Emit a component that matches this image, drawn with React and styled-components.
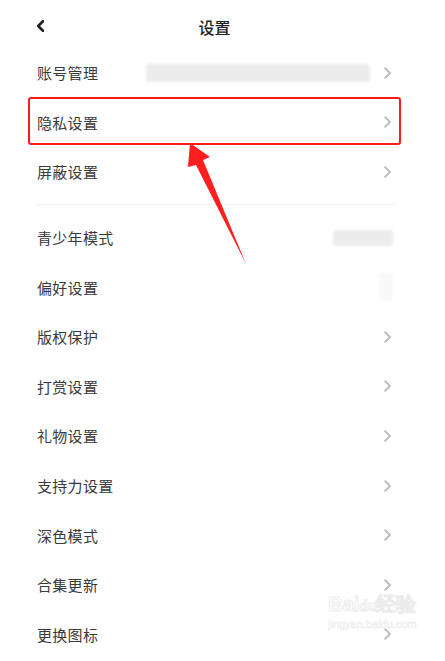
import React from "react";
import styled, { createGlobalStyle } from "styled-components";

const GROUPS = [
  [
    { name: "账号管理", extra: "account" },
    { name: "隐私设置", highlighted: true },
    { name: "屏蔽设置" },
  ],
  [
    { name: "青少年模式", extra: "teen", noArrow: true },
    { name: "偏好设置", extra: "pref", noArrow: true },
    { name: "版权保护" },
    { name: "打赏设置" },
    { name: "礼物设置" },
    { name: "支持力设置" },
    { name: "深色模式" },
    { name: "合集更新" },
    { name: "更换图标" },
  ],
];

const Chevron = ({ color = "#bdbdbd", size = 12, weight = 1.6, left }) => (
  <svg width={size * 0.6} height={size} viewBox="0 0 6 10" fill="none">
    <path
      d={left ? "M5 1 L1 5 L5 9" : "M1 1 L5 5 L1 9"}
      stroke={color}
      strokeWidth={weight}
      strokeLinecap="round"
      strokeLinejoin="round"
    />
  </svg>
);

const App = () => {
  return (
    <StyledPage>
      <GlobalStyle />
      <StyledHeader>
        <StyledBack>
          <Chevron left color="#222" size={12} weight={2.2} />
        </StyledBack>
        <StyledTitle>设置</StyledTitle>
      </StyledHeader>
      {GROUPS.map((group, gi) => (
        <React.Fragment key={gi}>
          {gi > 0 && <StyledDivider />}
          <StyledGroup>
            {group.map((item) => (
              <StyledRow key={item.name} $highlighted={item.highlighted}>
                <StyledLabel>{item.name}</StyledLabel>
                {item.extra === "account" && <StyledBlurBar $width={224} $offset={4} />}
                {item.extra === "teen" && <StyledBlurBar $width={60} $height={16} $offset={-2} />}
                {item.extra === "pref" && <StyledBlurBar $width={14} $height={28} $offset={-2} $light />}
                {!item.noArrow && (
                  <StyledArrow>
                    <Chevron />
                  </StyledArrow>
                )}
              </StyledRow>
            ))}
          </StyledGroup>
        </React.Fragment>
      ))}
      <StyledPointer width="70" height="130" viewBox="180 138 70 130">
        <polygon
          points="190,143 210,157 203,160 246,264 196,165 188,167"
          fill="#ff1f1f"
        />
      </StyledPointer>
      <StyledWatermark>
        <StyledWatermarkLogo>
          Bai<span>du</span>经验
        </StyledWatermarkLogo>
        <StyledWatermarkUrl>jingyan.baidu.com</StyledWatermarkUrl>
      </StyledWatermark>
    </StyledPage>
  );
};

const GlobalStyle = createGlobalStyle`
  body {
    margin: 0;
    background: #ffffff;
    font-family: "Noto Sans CJK SC", "Noto Sans", sans-serif;
  }
`;

const StyledPage = styled.div`
  position: relative;
  width: 445px;
  height: 661px;
  overflow: hidden;
  background: #ffffff;
`;

const StyledHeader = styled.div`
  position: relative;
  height: 48px;
  display: flex;
  align-items: center;
  justify-content: center;
  padding-top: 6px;
  box-sizing: border-box;
`;

const StyledBack = styled.div`
  position: absolute;
  left: 37px;
  top: 20px;
  display: flex;
`;

const StyledTitle = styled.div`
  font-size: 16px;
  font-weight: 500;
  color: #222;
  margin-left: -16px;
`;

const StyledGroup = styled.div`
  display: flex;
  flex-direction: column;
`;

const StyledRow = styled.div`
  position: relative;
  height: 49.6px;
  display: flex;
  align-items: center;
  padding: 0 54px 0 37px;
  gap: 10px;

  ${({ $highlighted }) =>
    $highlighted &&
    `
    &::after {
      content: "";
      position: absolute;
      left: 28px;
      right: 44px;
      top: -1px;
      bottom: 2px;
      border: 2.6px solid #ff1a1a;
      border-radius: 3px;
    }
  `}
`;

const StyledLabel = styled.div`
  flex: 1;
  font-size: 15px;
  color: #3a3a3a;
  letter-spacing: 0.3px;
`;

const StyledBlurBar = styled.div`
  width: ${({ $width }) => $width}px;
  height: ${({ $height }) => $height || 18}px;
  margin-right: ${({ $offset }) => $offset || 0}px;
  background: ${({ $light }) => ($light ? "#f9f9f9" : "#ececec")};
  border-radius: 3px;
  filter: blur(1.5px);
`;

const StyledArrow = styled.div`
  display: flex;
  align-items: center;
`;

const StyledDivider = styled.div`
  height: 1px;
  background: #f2f2f2;
  margin: 7px 50px 8px 36px;
`;

const StyledPointer = styled.svg`
  position: absolute;
  left: 180px;
  top: 138px;
`;

const StyledWatermark = styled.div`
  position: absolute;
  left: 328px;
  top: 592px;
  display: flex;
  flex-direction: column;
  align-items: center;
  font-family: "Liberation Sans", sans-serif;
  pointer-events: none;
`;

const StyledWatermarkLogo = styled.div`
  font-size: 20px;
  font-weight: 700;
  line-height: 24px;
  color: transparent;
  -webkit-text-stroke: 1px #ececec;

  span {
    font-size: 14px;
  }
`;

const StyledWatermarkUrl = styled.div`
  font-size: 11px;
  color: transparent;
  -webkit-text-stroke: 0.6px #ededed;
`;

export default App;
